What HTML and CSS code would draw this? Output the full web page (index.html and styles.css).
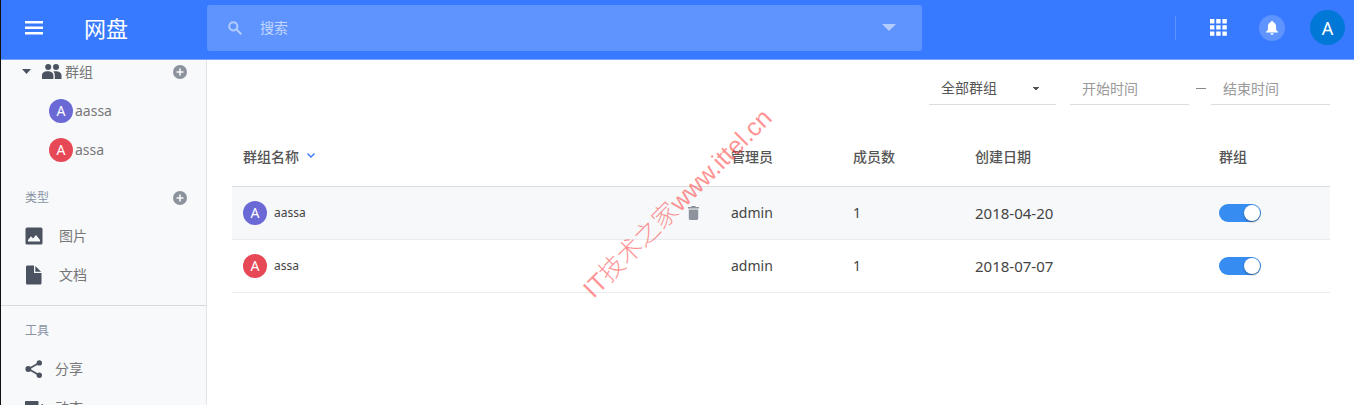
FILE: index.html
```html
<!DOCTYPE html>
<html lang="zh-CN">
<head>
    <meta charset="utf-8">
    <meta name="viewport" content="width=device-width, initial-scale=1.0">
    <title>网盘</title>
    <link rel="stylesheet" href="styles.css">
</head>
<body>
    <header class="topbar">
        <div class="brand">
            <button type="button" class="icon-btn" aria-label="菜单">
                <svg width="18" height="14" viewBox="0 0 18 14" fill="#fff"><path d="M0 0h18v2.4H0zM0 5.5h18v2.4H0zM0 11h18v2.4H0z"/></svg>
            </button>
            <h1>网盘</h1>
        </div>
        <form class="search">
            <svg width="14" height="14" viewBox="0 0 14 14" fill="none" stroke="#b3ccff" stroke-width="2"><circle cx="5.3" cy="5.3" r="4.1"/><path d="M8.3 8.3l5 5"/></svg>
            <input type="text" placeholder="搜索" aria-label="搜索">
            <button type="button" class="icon-btn" aria-label="高级搜索">
                <svg width="14" height="7" viewBox="0 0 14 7" fill="#b3ccff"><path d="M0 0h14L7 7z"/></svg>
            </button>
        </form>
        <div class="actions">
            <button type="button" class="icon-btn apps" aria-label="应用">
                <svg width="17" height="17" viewBox="0 0 17 17" fill="#fff"><path d="M0 0h4.4v4.4H0zM6.2 0h4.4v4.4H6.2zM12.4 0h4.4v4.4h-4.4zM0 6.2h4.4v4.4H0zM6.2 6.2h4.4v4.4H6.2zM12.4 6.2h4.4v4.4h-4.4zM0 12.4h4.4v4.4H0zM6.2 12.4h4.4v4.4H6.2zM12.4 12.4h4.4v4.4h-4.4z"/></svg>
            </button>
            <button type="button" class="icon-btn bell" aria-label="通知">
                <svg width="12" height="14" viewBox="0 0 12 14" fill="#fff"><path d="M6 0c.8 0 1.2.5 1.2 1.3C9 1.8 10.1 3.5 10.1 5.5V9L12 10.8v.8H0v-.8L1.9 9V5.5c0-2 1.1-3.7 2.9-4.2C4.8.5 5.2 0 6 0zM4.500 12.300h3C7.500 13.300 6.900 14 6 14s-1.500-.7-1.500-1.700z"/></svg>
            </button>
            <button type="button" class="icon-btn user" aria-label="账户">A</button>
        </div>
    </header>

    <div class="page">
        <nav class="sidebar">
            <div class="group-head">
                <svg width="9" height="5" viewBox="0 0 9 5" fill="#4b5361"><path d="M0 0h9L4.5 5z"/></svg>
                <svg width="20" height="15" viewBox="0 0 20 15" fill="#4b5361"><circle cx="6.2" cy="3" r="3"/><circle cx="14" cy="3" r="3"/><path d="M0 15v-3.500C0 8.700 2.500 7.300 5.700 7.300s5.700 1.400 5.700 4.200V15zM12.800 15v-3.500c0-1.700-.5-3-1.500-4 .6-.1 1.300-.2 2-.2 3.500 0 6.200 1.400 6.200 4.200V15z"/></svg>
                <span>群组</span>
                <button type="button" class="icon-btn add" aria-label="添加群组">
                    <svg width="14" height="14" viewBox="0 0 14 14"><circle cx="7" cy="7" r="7" fill="#8d939c"/><path d="M7 3.500v7M3.500 7h7" stroke="#f7f9fb" stroke-width="1.600"/></svg>
                </button>
            </div>
            <ul class="groups">
                <li><a href="#"><span class="avatar purple">A</span>aassa</a></li>
                <li><a href="#"><span class="avatar red">A</span>assa</a></li>
            </ul>

            <h2>类型
                <button type="button" class="icon-btn add" aria-label="添加类型">
                    <svg width="14" height="14" viewBox="0 0 14 14"><circle cx="7" cy="7" r="7" fill="#8d939c"/><path d="M7 3.500v7M3.500 7h7" stroke="#f7f9fb" stroke-width="1.600"/></svg>
                </button>
            </h2>
            <ul class="links types">
                <li><a href="#">
                    <svg width="18" height="18" viewBox="0 0 18 18"><rect x=".5" y=".5" width="17" height="17" rx="1.5" fill="#4b5361"/><path d="M3 14.500V13l3-3.800 2 2.300L11 8l4 5v1.500z" fill="#f7f9fb"/></svg>
                    图片
                </a></li>
                <li><a href="#">
                    <svg width="18" height="20" viewBox="0 0 18 20" fill="#4b5361"><path d="M2.500.5H9V8h7.500v10c0 .8-.5 1.500-1.500 1.500H2.500c-.8 0-1.500-.5-1.500-1.500V2C1 1 1.700.5 2.500.5zM10.300.9l5.800 5.900h-5.800z"/></svg>
                    文档
                </a></li>
            </ul>

            <h2 class="tools-title">工具</h2>
            <ul class="links">
                <li><a href="#">
                    <svg width="18" height="18" viewBox="0 0 18 18" fill="#4b5361"><path d="M14 3L3.500 9 14 15" fill="none" stroke="#4b5361" stroke-width="1.700"/><circle cx="14.300" cy="2.900" r="2.700"/><circle cx="3.300" cy="9" r="2.900"/><circle cx="14.300" cy="15.200" r="2.700"/></svg>
                    分享
                </a></li>
                <li><a href="#">
                    <svg width="18" height="14" viewBox="0 0 18 14" fill="#4b5361"><path d="M1 0h11.500c.7 0 1 .4 1 1v3.800L18 3v10l-4.500-3.800V13c0 .6-.3 1-1 1H1c-.6 0-1-.4-1-1V1c0-.6.4-1 1-1z"/></svg>
                    动态
                </a></li>
            </ul>
        </nav>

        <main class="content">
            <form class="filters">
                <select aria-label="群组范围">
                    <option>全部群组</option>
                </select>
                <input type="text" placeholder="开始时间" aria-label="开始时间">
                <span class="dash"></span>
                <input type="text" placeholder="结束时间" aria-label="结束时间">
            </form>

            <table class="group-table">
                <thead>
                    <tr>
                        <th class="col-name">群组名称
                            <svg width="8" height="5" viewBox="0 0 8 5" fill="none" stroke="#377aff" stroke-width="1.400"><path d="M.5.5L4 4 7.500.5"/></svg>
                        </th>
                        <th>管理员</th>
                        <th>成员数</th>
                        <th class="col-date">创建日期</th>
                        <th>群组</th>
                    </tr>
                </thead>
                <tbody>
                    <tr class="active">
                        <td>
                            <div class="name">
                                <span class="avatar purple">A</span>aassa
                                <button type="button" class="icon-btn delete" aria-label="删除">
                                    <svg width="11" height="14" viewBox="0 0 11 14" fill="#8d939c"><path d="M0 1h3l.8-1h3.400L8 1h3v1.500H0zM.8 3.400h9.400v9.100c0 .9-.6 1.500-1.500 1.500H2.300C1.400 14 .8 13.400.8 12.500z"/></svg>
                                </button>
                            </div>
                        </td>
                        <td>admin</td>
                        <td>1</td>
                        <td class="date">2018-04-20</td>
                        <td><input type="checkbox" class="switch" aria-label="aassa" checked></td>
                    </tr>
                    <tr>
                        <td>
                            <div class="name"><span class="avatar red">A</span>assa</div>
                        </td>
                        <td>admin</td>
                        <td>1</td>
                        <td class="date">2018-07-07</td>
                        <td><input type="checkbox" class="switch" aria-label="assa" checked></td>
                    </tr>
                </tbody>
            </table>
        </main>
    </div>

    <div class="watermark">IT技术之家www.ittel.cn</div>
</body>
</html>
```

FILE: styles.css
```css
* {
    box-sizing: border-box;
}

body {
    display: flex;
    flex-direction: column;
    height: 100vh;
    margin: 0;
    overflow: hidden;
    border-left: 1px solid #111;
    background: #fff;
    color: #444;
    font-family: "Noto Sans", "Noto Sans CJK SC", sans-serif;
    font-size: 14px;
    line-height: 20px;
}

input,
select,
button {
    font: inherit;
    color: inherit;
}

ul {
    list-style: none;
    margin: 0;
    padding: 0;
}

a {
    color: inherit;
    text-decoration: none;
}

svg {
    flex: none;
}

.icon-btn {
    display: flex;
    align-items: center;
    justify-content: center;
    padding: 0;
    border: none;
    background: none;
    cursor: pointer;
}

/* top bar */
.topbar {
    display: flex;
    flex: none;
    align-items: center;
    height: 60px;
    padding: 0 9px 4px 0;
    border-bottom: 1px solid #78a5ff;
    background: #377aff;
    color: #fff;
}

.brand {
    display: flex;
    flex: none;
    align-items: center;
    gap: 41px;
    width: 206px;
    padding-left: 24px;
}

.brand h1 {
    margin: 0;
    font-size: 22px;
    font-weight: 400;
    line-height: 32px;
}

.search {
    display: flex;
    flex: 1;
    align-items: center;
    gap: 18px;
    max-width: 715px;
    height: 46px;
    padding: 0 26px 0 21px;
    border-radius: 3px;
    background: #5f94ff;
}

.search input {
    flex: 1;
    min-width: 0;
    padding: 0;
    border: none;
    outline: none;
    background: none;
}

.search input::placeholder {
    color: #c3d7ff;
    opacity: 1;
}

.actions {
    display: flex;
    align-items: center;
    margin-left: auto;
}

.apps {
    height: 24px;
    padding-left: 34px;
    border-left: 1px solid #5f94ff;
}

.bell {
    width: 26px;
    height: 26px;
    margin: 0 25px 0 32px;
    border-radius: 50%;
    background: #5f94ff;
}

.user {
    width: 35px;
    height: 35px;
    border-radius: 50%;
    background: #0078d7;
    font-size: 18px;
}

/* sidebar */
.page {
    display: flex;
    flex: 1;
    min-height: 0;
}

.sidebar {
    flex: none;
    width: 206px;
    overflow: hidden;
    border-right: 1px solid #e3e5e8;
    background: #f7f9fb;
    color: #777;
}

.group-head {
    display: flex;
    align-items: center;
    height: 23px;
    padding: 0 19px 0 21px;
}

.group-head span {
    margin-left: 3px;
}

.group-head svg + svg {
    margin-left: 11px;
}

.add {
    margin-left: auto;
}

.groups {
    padding: 8px 0 11px;
}

.groups a {
    display: flex;
    align-items: center;
    gap: 2px;
    height: 39px;
    padding-left: 48px;
}

.avatar {
    flex: none;
    width: 24px;
    border-radius: 50%;
    color: #fff;
    line-height: 24px;
    text-align: center;
}

.purple {
    background: #6b69d6;
}

.red {
    background: #e74856;
}

.sidebar h2 {
    display: flex;
    align-items: center;
    height: 36px;
    margin: 0;
    padding: 0 19px 0 24px;
    color: #8a93a3;
    font-size: 12px;
    font-weight: 400;
}

.links a {
    display: flex;
    align-items: center;
    gap: 12px;
    height: 39px;
    padding-left: 24px;
}

.types {
    padding-bottom: 11px;
    border-bottom: 1px solid #d8dadd;
}

.types a {
    gap: 16px;
}

.sidebar .tools-title {
    margin-top: 7px;
}

/* main area */
.content {
    flex: 1;
    min-width: 0;
    padding: 12px 24px 0 25px;
}

.filters {
    display: flex;
    align-items: center;
    justify-content: flex-end;
    margin-bottom: 24px;
}

.filters select,
.filters input {
    width: 119px;
    height: 33px;
    padding: 0 12px;
    border: none;
    border-bottom: 1px solid #ddd;
    border-radius: 0;
    outline: none;
    background: none;
}

.filters select {
    width: 127px;
    margin-right: 14px;
    appearance: none;
    background: conic-gradient(from -45deg at 50% 100%, #555 90deg, transparent 0) no-repeat right 17px center / 6px 3px;
    color: #555;
}

.filters input::placeholder {
    color: #999;
    opacity: 1;
}

.dash {
    width: 10px;
    margin: 0 5px 0 7px;
    border-top: 1px solid #888;
}

.group-table {
    width: 100%;
    border-collapse: collapse;
    table-layout: fixed;
}

.group-table th,
.group-table td {
    height: 53px;
    padding: 0 11px;
    border-bottom: 1px solid #eaebed;
    text-align: left;
}

.group-table th {
    height: 57px;
    border-color: #dcdcde;
    color: #555;
    font-weight: 500;
}

.group-table .col-name {
    width: calc(100% / 9 * 4);
}

.group-table .col-date {
    width: calc(100% / 9 * 2);
}

.col-name svg {
    margin: 0 0 4px 4px;
}

.active {
    background: #f6f8fa;
}

.name {
    display: flex;
    align-items: center;
    gap: 7px;
    font-size: 12px;
}

.name .avatar {
    font-size: 14px;
}

.date {
    font-size: 15px;
}

.delete {
    margin: 0 10px 0 auto;
}

.switch {
    display: block;
    width: 42px;
    height: 18px;
    margin: 0;
    padding: 1px;
    border-radius: 9px;
    appearance: none;
    background: #ccc;
    cursor: pointer;
}

.switch::before {
    display: block;
    width: 16px;
    height: 16px;
    border-radius: 50%;
    background: #fff;
    box-shadow: 0 1px 2px rgba(0, 0, 0, 0.4);
    content: "";
}

.switch:checked {
    background: #368cf0;
}

.switch:checked::before {
    margin-left: auto;
}

.watermark {
    position: absolute;
    top: 50%;
    left: 50%;
    transform: translate(-50%, -50%) rotate(-45deg);
    color: rgba(255, 40, 40, 0.5);
    font: 25px/32px "Liberation Sans", "Noto Sans CJK SC", sans-serif;
    font-weight: 300;
    white-space: nowrap;
    pointer-events: none;
}
```
